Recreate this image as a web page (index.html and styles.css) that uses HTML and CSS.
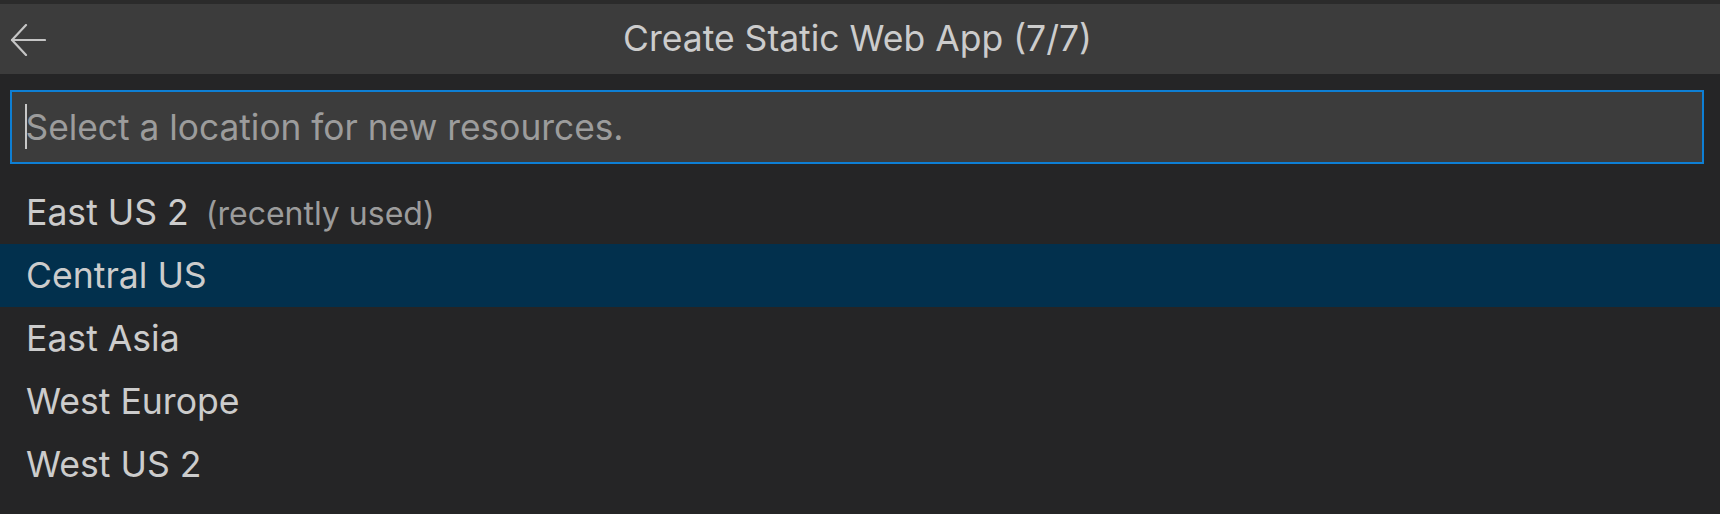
FILE: index.html
```html
<!DOCTYPE html>
<html lang="en">
<head>
<meta charset="utf-8">
<title>Create Static Web App</title>
<link rel="stylesheet" href="styles.css">
</head>
<body>
<div class="strip"></div>
<header class="titlebar">
  <button class="back" aria-label="Back">
    <svg width="36" height="32" viewBox="0 0 36 32" fill="none" stroke="#c5c5c5" stroke-width="2.2" stroke-linecap="round" stroke-linejoin="round">
      <path d="M2 16H35"/>
      <path d="M16 1L2 16L16 31"/>
    </svg>
  </button>
  <h1 class="title">Create Static Web App (7/7)</h1>
  <div></div>
</header>
<div class="input-wrap">
  <div class="input">
    <span class="caret"></span>
    <span class="placeholder">Select a location for new resources.</span>
  </div>
</div>
<ul class="list">
  <li class="item"><span class="label">East US 2</span><span class="desc">(recently used)</span></li>
  <li class="item selected"><span class="label">Central US</span></li>
  <li class="item"><span class="label">East Asia</span></li>
  <li class="item"><span class="label">West Europe</span></li>
  <li class="item"><span class="label">West US 2</span></li>
</ul>
</body>
</html>
```

FILE: styles.css
```css
* { box-sizing: border-box; }
html, body { margin: 0; padding: 0; }
body {
  width: 1720px;
  height: 514px;
  overflow: hidden;
  background: #252526;
  font-family: Inter, "Noto Sans", sans-serif;
  color: #cccccc;
}
.strip {
  height: 4px;
  background: #2b2b2b;
}
.titlebar {
  height: 70px;
  background: #3c3c3c;
  display: grid;
  grid-template-columns: 1fr auto 1fr;
  align-items: center;
}
.back {
  justify-self: start;
  background: none;
  border: 0;
  padding: 0;
  margin-left: 10px;
  width: 36px;
  height: 32px;
  display: flex;
  margin-top: 1px;
}
.title {
  margin: 0 0 0 -5px;
  font-size: 35.5px;
  font-weight: 400;
  color: #cccccc;
  line-height: 1;
}
.input-wrap {
  padding: 16px 16px 17px 10px;
}
.input {
  height: 74px;
  border: 2px solid #0e7fd4;
  background: #3c3c3c;
  display: flex;
  align-items: center;
  padding-left: 13px;
}
.caret {
  width: 1.5px;
  height: 45px;
  background: #c8c8c8;
  margin-top: -2px;
}
.placeholder {
  font-size: 35.3px;
  color: #9c9c9c;
  margin-left: -1px;
  margin-top: 1px;
}
.list {
  list-style: none;
  margin: 0;
  padding: 0;
}
.item {
  height: 63px;
  display: flex;
  align-items: center;
  padding-left: 26px;
  font-size: 35.6px;
}
.item.selected {
  background: #02304d;
}
.label { color: #cccccc; }
.desc {
  color: #9c9c9c;
  font-size: 32px;
  margin-left: 17px;
  margin-top: 2px;
}
```
